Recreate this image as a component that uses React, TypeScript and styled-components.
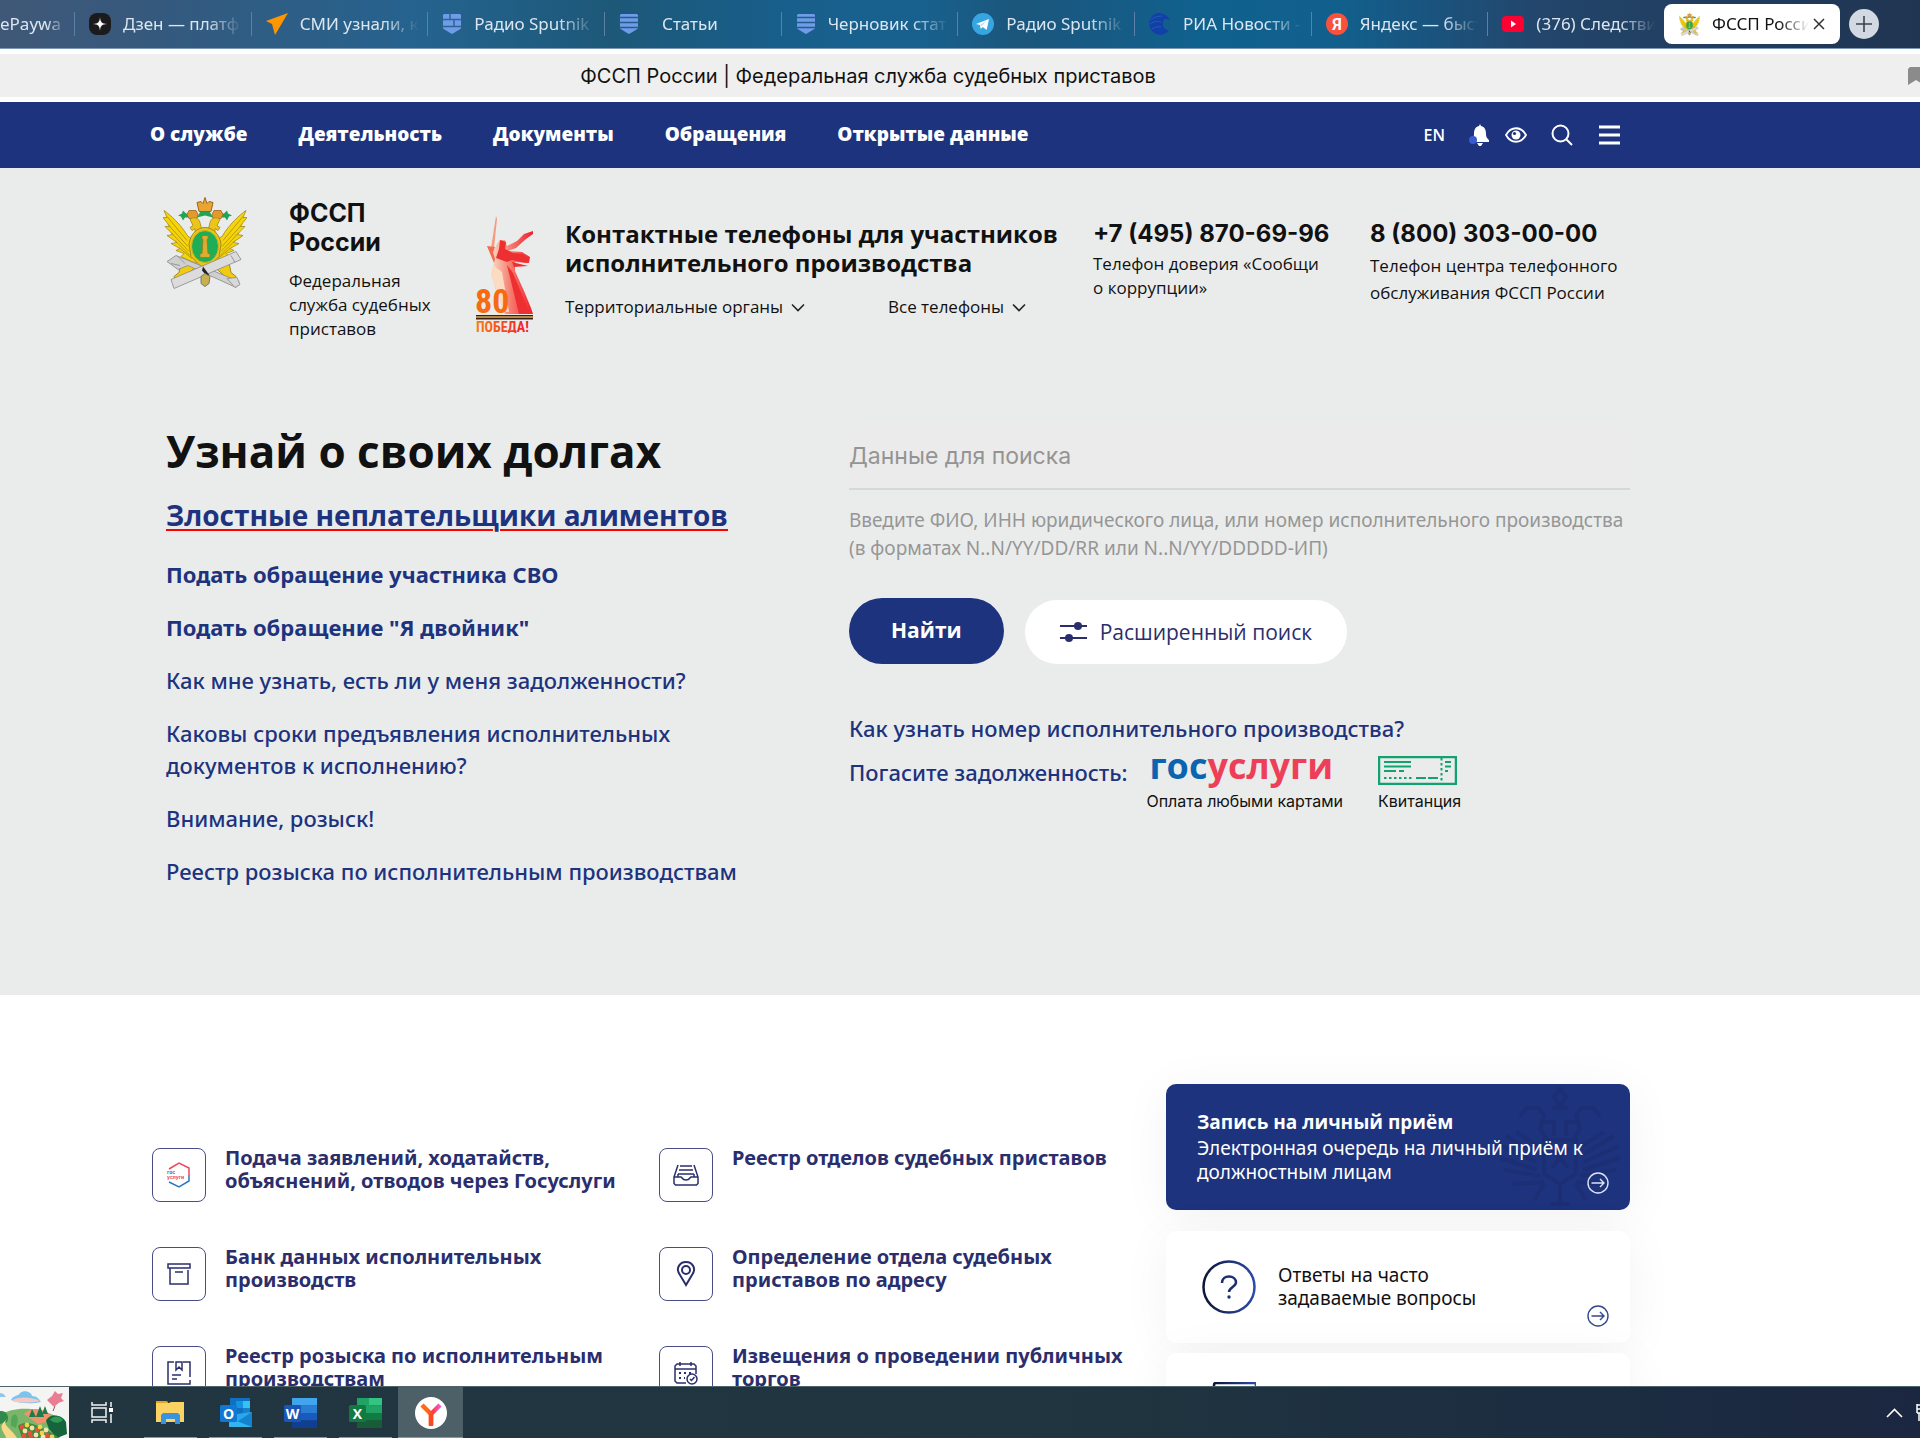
import React from "react";
import styled, { createGlobalStyle } from "styled-components";

const navy = "#1d337e";
const indigo = "#2b2e6c";
const noto = '"Noto Sans", "Open Sans", sans-serif';
const open = '"Open Sans", "Noto Sans", sans-serif';
const inter = 'Inter, "Noto Sans", sans-serif';
const narrow = '"Liberation Sans Narrow", "Roboto Condensed", Roboto, sans-serif';

const Global = createGlobalStyle`
  * { box-sizing: border-box; }
  body { margin: 0; font-family: ${noto}; color: #111; background: #fff; }
  a { color: inherit; text-decoration: none; }
  button { font: inherit; color: inherit; border: 0; background: none; padding: 0; cursor: pointer; }
  h1, h2, p, ul { margin: 0; padding: 0; list-style: none; }
  svg { display: block; flex: none; }
`;

const Screen = styled.div`
  height: 100vh;
  display: flex;
  flex-direction: column;
  overflow: hidden;
`;

/* Browser chrome */
const TabBar = styled.div`
  display: flex;
  align-items: center;
  flex: none;
  height: 49px;
  border-bottom: 1px solid #7d9ab8;
  font-family: ${noto};
  font-size: 17px;
  background: linear-gradient(90deg, #405878 0%, #35597d 8%, #25638f 22%, #1d5878 32%, #185f8c 41%, #18618e 48%, #1b567c 53%, #10618f 63%, #125f8c 70%, #23466c 80%, #213e60 88%, #203551 100%);
`;
const Tabs = styled.div`
  flex: 1;
  display: grid;
  grid-template-columns: 74px repeat(9, minmax(0, 1fr));
`;
const Tab = styled.button`
  display: flex;
  align-items: center;
  gap: 12px;
  height: 24px;
  padding: 0 6px 0 14px;
  border: 0;
  border-left: 1px solid #5b82a6;
  color: #dbe6f0;
  text-align: left;
  &:first-child { padding-left: 0; border-left: 0; }
`;
const TabText = styled.span<{ $inset?: boolean }>`
  flex: 1;
  min-width: 0;
  overflow: hidden;
  white-space: nowrap;
  line-height: 24px;
  padding-left: ${(p) => (p.$inset ? 11 : 0)}px;
  mask-image: linear-gradient(90deg, #000 68%, transparent 98%);
`;
const ActiveTab = styled.div`
  display: flex;
  align-items: center;
  gap: 12px;
  width: 176px;
  height: 40px;
  padding: 0 15px 0 15px;
  border-radius: 8px;
  background: #fff;
`;
const CloseTab = styled.button`
  margin-left: -10px;
`;
const NewTab = styled.button`
  display: grid;
  place-items: center;
  width: 30px;
  height: 30px;
  margin: 0 41px 0 9px;
  border-radius: 50%;
  background: #d3d9e2;
`;
const TitleBar = styled.div`
  display: flex;
  align-items: center;
  flex: none;
  height: 53px;
  border: solid #fff;
  border-width: 5px 0;
  background: #efefef;
  font-family: ${inter};
  font-size: 20px;
`;
const PageTitle = styled.div`
  flex: 1;
  text-align: center;
`;
const TitleTail = styled.div`
  width: 184px;
  overflow: hidden;
  padding-left: 172px;
`;

/* Site */
const Page = styled.main`
  flex: 1;
  min-height: 0;
  overflow: hidden;
`;
const Nav = styled.nav`
  display: flex;
  align-items: center;
  justify-content: space-between;
  height: 66px;
  padding: 0 300px 2px 150px;
  background: ${navy};
  color: #fff;
`;
const NavLinks = styled.div`
  display: flex;
  gap: 51px;
  font: 800 19px/24px ${open};
`;
const NavTools = styled.div`
  display: flex;
  align-items: center;
  gap: 16px;
  padding-top: 2px;
  font: 600 16px/24px ${open};
`;
const ToolGroup = styled.div`
  display: flex;
  align-items: center;
  gap: 26px;
  padding-left: 8px;
`;
const Hero = styled.section`
  padding: 29px 290px 108px 163px;
  background: #eaeceb;
`;
const Header = styled.header`
  display: grid;
  grid-template-columns: 94px 155px 57px 496px 245px minmax(0, 1fr);
  column-gap: 32px;
`;
const Brand = styled.a`
  padding-top: 2px;
`;
const BrandName = styled.strong`
  display: block;
  width: 110px;
  font: 700 25px/29px ${inter};
`;
const Small = styled.p<{ $tall?: boolean }>`
  font: 400 17px/${(p) => (p.$tall ? 27 : 24)}px ${open};
`;
const BrandText = styled(Small)`
  padding-top: 12px;
`;
const Lowered = styled.div`
  padding-top: 18px;
`;
const Contact = styled.div`
  padding-top: 22px;
`;
const ContactTitle = styled.h2`
  font: 700 24px/29px ${open};
`;
const ContactLinks = styled.div`
  display: grid;
  grid-template-columns: 323px 1fr;
  padding-top: 18px;
`;
const DropLink = styled.button`
  display: flex;
  align-items: center;
  gap: 8px;
  font: 400 17px/24px ${open};
`;
const Phone = styled.div`
  padding-top: 22px;
`;
const PhoneNumber = styled.a`
  display: block;
  margin-bottom: 3px;
  font: 700 24px/30px ${inter};
`;
const Debts = styled.div`
  display: grid;
  grid-template-columns: minmax(0, 683fr) minmax(0, 781fr);
  padding: 85px 0 0 3px;
`;
const H1 = styled.h1`
  font: 700 44px/50px ${open};
`;
const HotLink = styled.a`
  display: inline-block;
  margin: 19px 0 23px;
  color: ${navy};
  font: 700 28px/40px ${open};
  text-decoration: underline;
  text-decoration-color: #f00;
  text-decoration-thickness: 2px;
  text-underline-offset: 3px;
`;
const LinkList = styled.ul`
  display: grid;
  gap: 21px;
  max-width: 600px;
`;
const BlueLink = styled.a<{ $bold?: boolean }>`
  display: block;
  color: ${navy};
  font: ${(p) => (p.$bold ? 700 : 500)} 22px/32px ${noto};
`;
const SearchInput = styled.input`
  display: block;
  width: 100%;
  height: 64px;
  padding: 0 0 2px;
  border: 0;
  border-bottom: 2px solid #d6d7d7;
  border-radius: 0;
  outline: 0;
  background: #ebebeb;
  font: 400 23px/30px ${inter};
  &::placeholder { color: #949494; opacity: 1; }
`;
const Hint = styled.label`
  display: block;
  padding-top: 16px;
  color: #969696;
  font: 400 19px/28px ${noto};
`;
const Actions = styled.div`
  display: flex;
  align-items: flex-end;
  gap: 21px;
  padding: 36px 0 48px;
`;
const FindButton = styled.button`
  height: 66px;
  padding: 0 42px 2px;
  border-radius: 33px;
  background: ${navy};
  color: #fff;
  font: 700 21px/28px ${open};
`;
const MoreButton = styled.button`
  display: flex;
  align-items: center;
  gap: 13px;
  height: 64px;
  padding: 0 35px;
  border-radius: 32px;
  background: #fff;
  color: ${indigo};
  font: 400 21px/28px ${open};
`;
const PayRow = styled.div`
  display: flex;
  align-items: flex-start;
  padding-top: 12px;
`;
const PayOption = styled.a<{ $gap: number }>`
  margin-left: ${(p) => p.$gap}px;
  font: 400 16px/20px ${inter};
`;
const PayMark = styled.span`
  display: block;
  height: 35px;
`;
const Gosuslugi = styled(PayMark)`
  padding-left: 3px;
  color: #0b64b0;
  font: 700 36px/20px ${open};
`;
const Red = styled.span`
  color: #ee3f58;
`;

const Lower = styled.section`
  display: grid;
  grid-template-columns: minmax(0, 1014fr) minmax(0, 464fr);
  padding: 89px 290px 60px 152px;
`;
const Services = styled.ul`
  display: grid;
  grid-template-columns: 1fr 1fr;
  align-content: start;
  row-gap: 43px;
  padding-top: 62px;
`;
const Service = styled.a`
  display: flex;
  gap: 19px;
  color: ${indigo};
  font: 700 20px/23px ${noto};
`;
const ServiceIcon = styled.span`
  display: grid;
  place-items: center;
  flex: none;
  width: 54px;
  height: 54px;
  margin-top: 2px;
  border: 1px solid #4a4c86;
  border-radius: 8px;
`;
const ServiceName = styled.span`
  max-width: 405px;
`;
const Aside = styled.aside`
  display: grid;
  align-content: start;
`;
const Card = styled.a<{ $primary?: boolean }>`
  position: relative;
  display: flex;
  align-items: center;
  gap: 22px;
  min-height: ${(p) => (p.$primary ? 126 : 112)}px;
  margin-bottom: ${(p) => (p.$primary ? 21 : 10)}px;
  padding: ${(p) => (p.$primary ? "0 31px 2px" : "0 36px")};
  border-radius: 10px;
  background: ${(p) => (p.$primary ? navy : "#fff")};
  color: ${(p) => (p.$primary ? "#fff" : "#111")};
  box-shadow: 0 6px 50px rgba(0, 0, 0, 0.05);
`;
const CardTitle = styled.strong`
  display: block;
  font: 700 19px/27px ${open};
`;
const CardBody = styled.div`
  position: relative;
  font: 400 19px/24px ${noto};
`;
const CardLink = styled.div`
  width: 210px;
  font: 400 19px/23px ${noto};
`;
const Corner = styled.span`
  position: absolute;
  right: 21px;
  bottom: 16px;
`;
const Watermark = styled.span`
  position: absolute;
  right: 2px;
  top: 2px;
`;

/* Taskbar */
const Taskbar = styled.footer`
  display: flex;
  align-items: stretch;
  flex: none;
  height: 52px;
  border-top: 1px solid #4e6468;
  background: linear-gradient(90deg, #21363f 0%, #20353f 55%, #1c2d41 80%, #1b2740 100%);
`;
const TaskView = styled.button`
  display: grid;
  place-items: center;
  width: 69px;
  padding-right: 4px;
`;
const TaskButton = styled.button<{ $active?: boolean }>`
  position: relative;
  display: grid;
  place-items: center;
  width: 65px;
  background: ${(p) => (p.$active ? "#4d5f67" : "none")};
  &::after {
    content: "";
    position: absolute;
    bottom: 0;
    left: ${(p) => (p.$active ? 0 : 6)}px;
    right: ${(p) => (p.$active ? 0 : 6)}px;
    height: 1px;
    background: #6c9fce;
  }
`;
const Tray = styled.div`
  display: flex;
  align-items: center;
  gap: 13px;
  margin-left: auto;
`;

function Arms({ w, h }: { w: number; h: number }) {
  return (
    <svg width={w} height={h} viewBox="0 0 84 92" aria-hidden="true">
      {[false, true].map((flip) => (
        <g key={String(flip)} transform={flip ? "translate(84 0) scale(-1 1)" : undefined}>
          <path d="M1 13C7 17 18 27 25 39L31 42 34 66 26 63 18 59 21 56 13 53 17 51 8 46 14 45 4 38 10 37 2 29 7 29 0 20 4 20Z" fill="#f5d50a" stroke="#a08a1c" strokeWidth=".8" />
          <path d="M4 19 24 43M5 27 25 49M8 35 26 54M12 43 27 58M17 51 29 61" stroke="#b99a10" strokeWidth="1" fill="none" />
          <path d="M15 18l4-2 1-3 3 3h6l-1 4h-6l-2 3-2-4z" fill="#22a455" />
          <path d="M24 17l2-4h7l2 4-1 4h-8z" fill="#e39a2d" stroke="#9d6417" strokeWidth=".8" />
          <path d="M27 22c3-3 9-2 10 3l3 12-8 2 0-8-3 2-2-3 3-2z" fill="#edc417" stroke="#a08a1c" strokeWidth=".8" />
        </g>
      ))}
      <path d="M42 30C34 30 27 37 26 47L28 59 35 66 42 73 49 66 56 59 58 47C57 37 50 30 42 30Z" fill="#edc417" stroke="#a08a1c" strokeWidth="1" />
      <path d="M38 13h8l4 7-8-2-8 2z" fill="#22a455" />
      <path d="M34 5l4-1 2 2 2-6 2 6 2-2 4 1-2 9H36z" fill="#e8a534" stroke="#9d6417" strokeWidth="1" />
      <path d="M18 65l-2 10-5 4 2 6 7 0 4-8 7-6M66 65l2 10 5 4-2 6-7 0-4-8-7-6" fill="#f0cb12" stroke="#a08a1c" />
      <path d="M4 64l9-6 10 4 53 22-3 6-48-22-10 4z" fill="#cfcfcf" stroke="#888" strokeWidth=".8" />
      <path d="M8 82L73 54l5 8L11 91z" fill="#dcdcdc" stroke="#888" strokeWidth=".8" />
      <path d="M64 81l8 9 5-3-3-7zM8 66l9 2M15 59l7 7M68 58l4 7" stroke="#999" fill="#d8d8d8" />
      <ellipse cx="42" cy="49" rx="13.500" ry="16" fill="#1fae57" stroke="#d9b31a" strokeWidth="1" />
      <path d="M39 38h6v4h-1l1 14h2v4h-10v-4h2l1-14h-1z" fill="#dcae2e" stroke="#9a7620" strokeWidth=".8" />
      <path d="M40 69l6 8-1 3-6-7z" fill="#222" />
      <path d="M38 79l4-3 5 3-1 7-4 3-4-3z" fill="#c9b04c" stroke="#777" />
    </svg>
  );
}

function Victory() {
  return (
    <svg width="58" height="118" viewBox="0 0 58 118" role="img" aria-label="80 Победа!">
      <defs>
        <linearGradient id="vg" x1="0" x2="1"><stop offset="0" stopColor="#f97d12" /><stop offset="1" stopColor="#ee1c2c" /></linearGradient>
        <linearGradient id="vs" x1="0" x2="1"><stop offset="0" stopColor="#fbdcc3" /><stop offset=".5" stopColor="#f4776a" /><stop offset="1" stopColor="#f01f2c" /></linearGradient>
      </defs>
      <path d="M20 1l1 3-3 29-3 0z" fill="#f69b80" />
      <path d="M11 31l8 1-1 3 5 8-5 5-5-12z" fill="#f46a50" />
      <path d="M21 29l3-4 5 0 2 6 10-5 7-7 9-3 0 3-7 5-10 9-8 3 14 1 8 5-1 6-14-1 0 9 9 20 7 17 2 6H29L19 73l-4-14 4-15-2-7z" fill="url(#vs)" />
      <path d="M24 25l6 2-1 7 8 4 10 1 6 5-2 4-15-3-5 2-11-4 3-9zM31 50l6 8 17 41H43zM36 47l16 4-14 1z" fill="#ee2f31" />
      <path d="M17 50l9 7 7 40-6-1-10-30z" fill="#fbdcc3" />
      <text x="-1" y="98" fontFamily={narrow} fontWeight="700" fontSize="34" fill="#f66b12">80</text>
      <path d="M0 100h57v1.500H0z" fill="#3b210d" /><path d="M0 101.500h57v1.500H0z" fill="#d9851c" /><path d="M0 103h57v1.500H0z" fill="#3b210d" />
      <text x="0" y="117" fontFamily={narrow} fontWeight="700" fontSize="14" fill="url(#vg)">ПОБЕДА!</text>
    </svg>
  );
}

const Chevron = () => (
  <svg width="14" height="9" viewBox="0 0 14 9"><path d="M1 1.500l6 6 6-6" fill="none" stroke="#222" strokeWidth="1.600" /></svg>
);

const ArrowCircle = ({ color }: { color: string }) => (
  <svg width="22" height="22" viewBox="0 0 22 22" fill="none" stroke={color} strokeWidth="1.400">
    <circle cx="11" cy="11" r="10" /><path d="M4.500 11h12.500M13 7l4 4-4 4" />
  </svg>
);

const Shield = ({ split }: { split?: boolean }) => (
  <svg width="20" height="22" viewBox="0 0 20 22">
    <path d="M2 1h16l1 1v13c0 1-4 3-9 6-5-3-9-5-9-6V2z" fill="#6f9be8" />
    {split ? <path d="M8 0v6M0 6.500h20M12 6.500v7M0 13.500h20" stroke="#2c6592" strokeWidth="1.500" /> : <path d="M0 4.500h20M0 9.500h20M0 14.500h20" stroke="#215f8a" strokeWidth="1.500" />}
  </svg>
);

const tabIcons: Record<string, React.ReactNode> = {
  dzen: <svg width="22" height="22" viewBox="0 0 22 22"><rect width="22" height="22" rx="8" fill="#1b1b1d" /><path d="M11 4c.4 5 1.500 6.500 7 7-5.500.5-6.600 2-7 7-.4-5-1.500-6.500-7-7 5.500-.5 6.600-2 7-7z" fill="#fff" /></svg>,
  smi: <svg width="22" height="22" viewBox="0 0 22 22"><path d="M22 0L0 8l6 3 3 11z" fill="#ff9500" /></svg>,
  split: <Shield split />,
  shield: <Shield />,
  tg: <svg width="22" height="22" viewBox="0 0 22 22"><circle cx="11" cy="11" r="11" fill="#37a6e0" /><path d="M4 11l13-5-2.300 11-4-3-2 2-.7-4z" fill="#fff" /><path d="M8 12l6-4-4 5" fill="#b8dcf2" /></svg>,
  ria: <svg width="22" height="22" viewBox="0 0 22 22"><path d="M11 0c5 1 8 3 10 8-3-3-5-3-7 0-1 5 1 9 6 9-3 4-8 6-13 4C1 18-1 11 1 7c2-5 5-7 10-7z" fill="#123fa8" /><path d="M2 7c3-3 7-4 11-4M1 11c4-3 8-3 11-2M3 16c3-2 6-3 9-2" stroke="#1c60a8" fill="none" /></svg>,
  ya: <svg width="22" height="22" viewBox="0 0 22 22"><circle cx="11" cy="11" r="11" fill="#fb503b" /><text x="11" y="17" textAnchor="middle" fontFamily="Roboto, sans-serif" fontWeight="700" fontSize="16" fill="#fff">Я</text></svg>,
  yt: <svg width="22" height="16" viewBox="0 0 22 16"><rect width="22" height="16" rx="4" fill="#ff0033" /><path d="M9 4.500l5 3.500-5 3.500z" fill="#fff" /></svg>,
};

const tabs: [string | null, string][] = [
  [null, "ePaywa"],
  ["dzen", "Дзен — платф"],
  ["smi", "СМИ узнали, к"],
  ["split", "Радио Sputnik"],
  ["shield", "Статьи"],
  ["shield", "Черновик стат"],
  ["tg", "Радио Sputnik"],
  ["ria", "РИА Новости -"],
  ["ya", "Яндекс — быст"],
  ["yt", "(376) Следстви"],
];

const line = { fill: "none", stroke: indigo, strokeWidth: 1.5 };
const services: [string, React.ReactNode][] = [
  ["Подача заявлений, ходатайств, объяснений, отводов через Госуслуги",
    <svg width="24" height="26" viewBox="0 0 24 26" fill="none" strokeWidth="1.500"><path d="M2 7l10-6 10 5v7" stroke="#ef4561" /><path d="M22 13v6l-10 6-10-5" stroke="#2b78c0" /><text x="0" y="11.500" fontFamily={inter} fontWeight="700" fontSize="5" fill="#2b78c0">гос</text><text x="0" y="16.500" fontFamily={inter} fontWeight="700" fontSize="5" fill="#ef4561">услуги</text></svg>],
  ["Реестр отделов судебных приставов",
    <svg width="26" height="22" viewBox="0 0 26 22" {...line}><path d="M5 1L1 13v6.500l1.500 1.500h21l1.500-1.500V13L21 1M1 13h7c1 0 1 3 5 3s4-3 5-3h7M7 2h12M6 6h14M5 10h16M5 10v3M21 10v3" /></svg>],
  ["Банк данных исполнительных производств",
    <svg width="24" height="22" viewBox="0 0 24 22" {...line}><path d="M1 1h22v4H1zM3 5v16h18V7M8 9h8" /></svg>],
  ["Определение отдела судебных приставов по адресу",
    <svg width="20" height="26" viewBox="0 0 20 26" {...line} strokeWidth={2}><path d="M10 24L4 14C-1 7 4 1 10 1s11 6 6 13z" /><circle cx="10" cy="9" r="4" /></svg>],
  ["Реестр розыска по исполнительным производствам",
    <svg width="24" height="24" viewBox="0 0 24 24" {...line}><path d="M7 1H1v22h22V19M16 1h7v15M9 1h6v8l-3-3-3 3zM5 14h9M5 18h5" /></svg>],
  ["Извещения о проведении публичных торгов",
    <svg width="24" height="24" viewBox="0 0 24 24" {...line}><path d="M12 22H3l-2-2V5l2-2h17l2 2v8M1 8h21M6 1v4M17 1v4M10 3h3" /><path d="M5 12h2M10 12h2M15 12h2M5 17h2M10 17h1" strokeWidth="2" /><circle cx="18" cy="18" r="5" /><path d="M16 18l1.500 1.500L20.500 16" /></svg>],
];

const questions: [string, boolean][] = [
  ["Подать обращение участника СВО", true],
  ['Подать обращение "Я двойник"', true],
  ["Как мне узнать, есть ли у меня задолженности?", false],
  ["Каковы сроки предъявления исполнительных документов к исполнению?", false],
  ["Внимание, розыск!", false],
  ["Реестр розыска по исполнительным производствам", false],
];

const Garden = () => (
  <svg width="69" height="51" viewBox="0 0 69 51" aria-hidden="true">
    <rect width="69" height="51" fill="#f4f5f3" />
    <path d="M11 13c2-5 8-4 9-7 5-4 12 0 12 3 5 0 7 3 9 6-8 2-22 2-30-2z" fill="#7cc4ee" />
    <path d="M12 14c6-5 20-4 28 0-8 2-20 2-28 0z" fill="#f4c9c4" />
    <path d="M0 6c4 0 5 3 6 4H0z" fill="#8cc9ec" />
    <path d="M0 28c14-8 34-9 58 2v21H0z" fill="#79b66a" />
    <path d="M24 27c10-9 22-5 32 6l-18 4z" fill="#f0936d" />
    <path d="M36 30l4-11 4 11zM42 27l3-8 3 8zM29 30l3-8 4 8z" fill="#1e7a4a" />
    <path d="M55 11l-3 6 3 2-2 5M58 8l2 6-5 4" stroke="#a0505c" fill="none" />
    <path d="M47 13l5-4 3-5 3 3 5-1-2 5 3 3-6 2-4 4-4-4z" fill="#ea7d92" />
    <path d="M46 34c2-7 15-8 20 1l1 12-10 4-8-9z" fill="#15643c" /><path d="M50 33c4-5 10-4 13 0-4 4-9 3-13 0z" fill="#2f9a53" />
    <path d="M0 24c6-1 10 5 7 11l-7 2z" fill="#2f8a4c" /><path d="M11 32c2-6 6-6 7 1l-2 8-5-2z" fill="#53a75a" />
    <path d="M7 32c-6 6 4 9 10 19H6c-1-6-10-10 1-19z" fill="#f6d989" />
    <path d="M18 39c8-8 26 2 42 12H22z" fill="#3f8a3b" />
    {[[22, 40, 0], [27, 38, 1], [32, 41, 2], [25, 44, 2], [37, 43, 0], [30, 46, 0], [42, 46, 1], [36, 48, 2], [47, 48, 0], [24, 49, 0], [52, 50, 1], [43, 50, 2], [40, 40, 1], [46, 43, 2], [31, 50, 0]].map(([x, y, c], i) => (
      <circle key={i} cx={x} cy={y} r="2.400" fill={["#e8503c", "#f7d04a", "#f2e4b0"][c]} />
    ))}
  </svg>
);

const Outlook = () => (
  <svg width="32" height="30" viewBox="0 0 32 30"><path d="M10 0h20v20H10z" fill="#0f6fc0" /><path d="M16 3h7v7h-7z" fill="#1493df" /><path d="M23 3h7v7h-7z" fill="#35c1f1" /><path d="M23 10h7v8h-7z" fill="#1680cf" /><path d="M9 17l23-3v15H9z" fill="#28a8ea" /><path d="M9 29L32 14v15z" fill="#1483cf" /><path d="M9 20l23 9H9z" fill="#32b5ef" /><rect y="7" width="17" height="17" rx="1.500" fill="#0f78d4" /><text x="8.500" y="20.500" textAnchor="middle" fontFamily={open} fontWeight="700" fontSize="14" fill="#fff">O</text></svg>
);
const Office = ({ letter, shades }: { letter: string; shades: string[] }) => (
  <svg width="33" height="30" viewBox="0 0 33 30">
    {shades.slice(0, 4).map((s, i) => <rect key={s} x="8" y={i * 7.5} width="25" height="7.600" fill={s} />)}
    {letter === "X" && <path d="M8 0h12v15H8z" fill="#21a366" />}
    {letter === "X" && <path d="M8 15h12v7H8z" fill="#107c41" />}
    <rect y="7" width="17" height="17" rx="1.500" fill={shades[4]} />
    <text x="8.500" y="20.500" textAnchor="middle" fontFamily={open} fontWeight="700" fontSize="14" fill="#fff">{letter}</text>
  </svg>
);

export default function App() {
  return (
    <Screen>
      <Global />
      <TabBar>
        <Tabs>
          {tabs.map(([icon, text], i) => (
            <Tab key={i}>
              {icon && tabIcons[icon]}
              <TabText $inset={text === "Статьи"}>{text}</TabText>
            </Tab>
          ))}
        </Tabs>
        <ActiveTab>
          <Arms w={21} h={23} />
          <TabText>ФССП Росси</TabText>
          <CloseTab aria-label="Закрыть вкладку">
            <svg width="12" height="12" viewBox="0 0 12 12"><path d="M1 1l10 10M11 1L1 11" stroke="#333" strokeWidth="1.500" /></svg>
          </CloseTab>
        </ActiveTab>
        <NewTab aria-label="Новая вкладка">
          <svg width="16" height="16" viewBox="0 0 16 16"><path d="M8 0v16M0 8h16" stroke="#3b4350" strokeWidth="1.600" /></svg>
        </NewTab>
      </TabBar>
      <TitleBar>
        <PageTitle>ФССП России | Федеральная служба судебных приставов</PageTitle>
        <TitleTail>
          <svg width="16" height="18" viewBox="0 0 16 18"><path d="M2 0h12l2 2v16l-8-5-8 5V2z" fill="#8b8b8b" /></svg>
        </TitleTail>
      </TitleBar>

      <Page>
        <Nav>
          <NavLinks>
            {["О службе", "Деятельность", "Документы", "Обращения", "Открытые данные"].map((t) => <a href="#" key={t}>{t}</a>)}
          </NavLinks>
          <NavTools>
            <a href="#">EN</a>
            <ToolGroup>
              <button aria-label="Уведомления"><svg width="20" height="22" viewBox="0 0 20 22"><path d="M11 0l1 2c4 1 5 4 5 8 0 3 1 4 3 6v2H2v-2c2-2 3-3 3-6 0-4 1-7 5-8z" fill="#fff" /><path d="M8 19h6l-2 3h-2z" fill="#fff" /><circle cx="4" cy="16" r="4" fill="#3a5bd0" /></svg></button>
            </ToolGroup>
            <button aria-label="Версия для слабовидящих"><svg width="22" height="16" viewBox="0 0 22 16"><path d="M1 8c5-9 15-9 20 0-5 9-15 9-20 0z" fill="none" stroke="#fff" strokeWidth="1.800" /><circle cx="11" cy="8" r="4.500" fill="#fff" /><circle cx="9.500" cy="6.500" r="1.600" fill={navy} /></svg></button>
            <ToolGroup>
              <button aria-label="Поиск"><svg width="22" height="22" viewBox="0 0 22 22" fill="none" stroke="#fff" strokeWidth="2"><circle cx="9.500" cy="9.500" r="8" /><path d="M15 15l6 6" /></svg></button>
              <button aria-label="Меню"><svg width="21" height="20" viewBox="0 0 21 20"><path d="M0 2h21M0 10h21M0 18h21" stroke="#fff" strokeWidth="3.200" /></svg></button>
            </ToolGroup>
          </NavTools>
        </Nav>

        <Hero>
          <Header>
            <Arms w={84} h={93} />
            <Brand href="#">
              <BrandName>ФССП России</BrandName>
              <BrandText>Федеральная служба судебных приставов</BrandText>
            </Brand>
            <Lowered><Victory /></Lowered>
            <Contact>
              <ContactTitle>Контактные телефоны для участников исполнительного производства</ContactTitle>
              <ContactLinks>
                <DropLink>Территориальные органы <Chevron /></DropLink>
                <DropLink>Все телефоны <Chevron /></DropLink>
              </ContactLinks>
            </Contact>
            <Phone>
              <PhoneNumber href="#">+7 (495) 870-69-96</PhoneNumber>
              <Small>Телефон доверия «Сообщи о&nbsp;коррупции»</Small>
            </Phone>
            <Phone>
              <PhoneNumber href="#">8 (800) 303-00-00</PhoneNumber>
              <Small $tall>Телефон центра телефонного обслуживания ФССП России</Small>
            </Phone>
          </Header>

          <Debts>
            <div>
              <H1>Узнай о своих долгах</H1>
              <HotLink href="#">Злостные неплательщики алиментов</HotLink>
              <LinkList>
                {questions.map(([t, bold]) => <li key={t}><BlueLink href="#" $bold={bold}>{t}</BlueLink></li>)}
              </LinkList>
            </div>
            <div>
              <SearchInput id="query" placeholder="Данные для поиска" />
              <Hint htmlFor="query">
                Введите ФИО, ИНН юридического лица, или номер исполнительного производства
                <br />(в форматах N..N/YY/DD/RR или N..N/YY/DDDDD-ИП)
              </Hint>
              <Actions>
                <FindButton>Найти</FindButton>
                <MoreButton>
                  <svg width="27" height="22" viewBox="0 0 27 22"><path d="M0 5h27M0 17h27" stroke={indigo} strokeWidth="2" /><circle cx="18" cy="5" r="4" fill={indigo} /><circle cx="9" cy="17" r="4" fill={indigo} /></svg>
                  Расширенный поиск
                </MoreButton>
              </Actions>
              <BlueLink href="#">Как узнать номер исполнительного производства?</BlueLink>
              <PayRow>
                <BlueLink href="#">Погасите задолженность:</BlueLink>
                <PayOption href="#" $gap={19}>
                  <Gosuslugi>гос<Red>услуги</Red></Gosuslugi>
                  Оплата любыми картами
                </PayOption>
                <PayOption href="#" $gap={35}>
                  <PayMark>
                    <svg width="79" height="29" viewBox="0 0 79 29" fill="none" stroke="#12a26f" strokeWidth="2">
                      <rect x="1" y="1" width="77" height="27" strokeWidth="2.500" /><path d="M6 6h27M6 10.500h27M6 15h12M21 15h5M38 22h10M50 22h10M67 6h6M67 10.500h6M67 15h3" /><path d="M6 22h28M63.500 2v26" strokeDasharray="2.500 2.500" />
                    </svg>
                  </PayMark>
                  Квитанция
                </PayOption>
              </PayRow>
            </div>
          </Debts>
        </Hero>

        <Lower>
          <Services>
            {services.map(([t, icon]) => (
              <li key={t}>
                <Service href="#"><ServiceIcon>{icon}</ServiceIcon><ServiceName>{t}</ServiceName></Service>
              </li>
            ))}
          </Services>
          <Aside>
            <Card href="#" $primary>
              <Watermark>
                <svg width="136" height="122" viewBox="0 0 136 122" fill="none" stroke="#1c2f75" strokeWidth="4" aria-hidden="true">
                  <path d="M68 20l6-9-6-8-6 8zM60 22h16M28 30l7-8h12l5 8-4 12 8 14M108 30l-7-8H89l-5 8 4 12-8 14M48 36h14v14M88 36H74v14" />
                  <path d="M46 60L24 46M44 68L14 50M44 76L9 60M45 84L8 72M48 90L12 84M52 96L20 98M90 60l22-14M92 68l30-18M92 76l35-16M91 84l37-12M88 90l36-6M84 96l32 2" />
                  <path d="M52 54h32v34L68 98 52 88zM60 62l16 20M76 62L60 82M52 98l-10 16M84 98l10 16M68 98v22M58 118h20" />
                </svg>
              </Watermark>
              <CardBody>
                <CardTitle>Запись на личный приём</CardTitle>
                Электронная очередь на личный приём к должностным лицам
              </CardBody>
              <Corner><ArrowCircle color="#dfe4f5" /></Corner>
            </Card>
            <Card href="#">
              <svg width="54" height="54" viewBox="0 0 54 54" fill="none">
                <defs><linearGradient id="cg" x1="0" x2="1"><stop offset="0" stopColor="#0d1636" /><stop offset="1" stopColor="#2c4ba6" /></linearGradient></defs>
                <circle cx="27" cy="27" r="25.500" stroke="url(#cg)" strokeWidth="2.500" />
                <path d="M20 23c0-4 3-6.500 7-6.500s7 2.500 7 6c0 4-7 5-7 9.500" stroke="#1d2f70" strokeWidth="2.500" />
                <circle cx="27" cy="37" r="1.700" fill="#1d2f70" />
              </svg>
              <CardLink>Ответы на часто задаваемые вопросы</CardLink>
              <Corner><ArrowCircle color="#34478f" /></Corner>
            </Card>
            <Card href="#">
              <svg width="54" height="54" viewBox="0 0 54 54" fill="none" stroke="url(#cg)" strokeWidth="2.500"><path d="M12 52V3q0-2 2-2h38q2 0 2 2v49z" /></svg>
            </Card>
          </Aside>
        </Lower>
      </Page>

      <Taskbar>
        <Garden />
        <TaskView aria-label="Представление задач">
          <svg width="22" height="21" viewBox="0 0 22 21" fill="none" stroke="#f2f4f5" strokeWidth="1.500"><path d="M1 0v3h14V0M1 21v-3h14v3M1 6h14v9H1zM20 0v5M20 12v9" /><path d="M18 6h4v4h-4z" fill="#fff" stroke="none" /></svg>
        </TaskView>
        <TaskButton aria-label="Проводник">
          <svg width="29" height="25" viewBox="0 0 29 25"><path d="M0 1h11l2 3H0z" fill="#e8a317" /><path d="M0 3h13l2-1h13v20H0z" fill="#fcd262" /><path d="M5 24v-9l2-2h15l2 2v9h-5v-5h-9v5z" fill="#3a93dc" /></svg>
        </TaskButton>
        <TaskButton aria-label="Outlook"><Outlook /></TaskButton>
        <TaskButton aria-label="Word"><Office letter="W" shades={["#41a5ee", "#2b7cd3", "#185abd", "#103f91", "#1a56b8"]} /></TaskButton>
        <TaskButton aria-label="Excel"><Office letter="X" shades={["#33c481", "#21a366", "#107c41", "#185c37", "#117a40"]} /></TaskButton>
        <TaskButton aria-label="Яндекс Браузер" $active>
          <svg width="32" height="32" viewBox="0 0 32 32"><defs><linearGradient id="yg" x1="0" x2="1"><stop offset=".3" stopColor="#ff6a1a" /><stop offset=".6" stopColor="#fb3f3a" /><stop offset="1" stopColor="#f455d8" /></linearGradient></defs><circle cx="16" cy="16" r="16" fill="#fff" /><path d="M7 8l9 9 9-9M16 16v12" stroke="url(#yg)" strokeWidth="4.500" fill="none" /><path d="M13.800 17h4.400v12h-4.400z" fill="#fb4a22" /></svg>
        </TaskButton>
        <Tray>
          <svg width="17" height="10" viewBox="0 0 17 10"><path d="M1 9l7.500-7.500L16 9" fill="none" stroke="#fff" strokeWidth="1.600" /></svg>
          <svg width="4" height="18" viewBox="0 0 4 18"><path d="M1 0v9M1 1h3M1 5h3M1 9h3M3 9v8" stroke="#fff" strokeWidth="1.500" fill="none" /></svg>
        </Tray>
      </Taskbar>
    </Screen>
  );
}
